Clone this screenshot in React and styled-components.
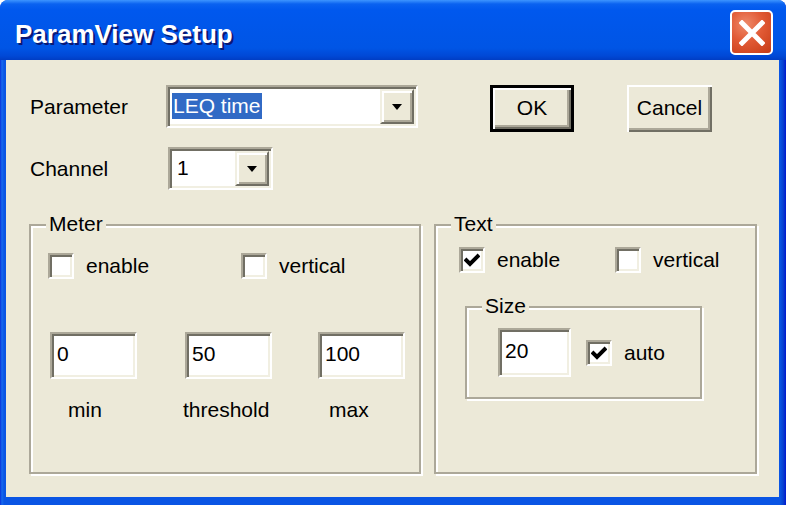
import React from 'react';
import styled, { createGlobalStyle } from 'styled-components';

const FACE = '#ECE9D8';
const UI_FONT = `"Liberation Sans", Arial, sans-serif`;

const GlobalStyle = createGlobalStyle`
  body {
    margin: 0;
    background: #fff;
    font-family: ${UI_FONT};
  }
`;

const Window = styled.div`
  width: 786px;
  height: 505px;
  display: flex;
  flex-direction: column;
  background: linear-gradient(90deg, #0831d9 0, #166aee 2px, #0a55e4 4px, #0a55e4 780px, #0842d0 783px, #0019cf 786px);
  border-radius: 8px 8px 0 0;
  overflow: hidden;
`;

const TitleBar = styled.div`
  height: 60px;
  flex: none;
  box-sizing: border-box;
  display: flex;
  align-items: center;
  justify-content: space-between;
  padding: 5px 13px 0 15px;
  background: linear-gradient(#3d95ff 0, #0a62f0 4px, #0058ee 10px, #0055e5 48px, #0048d6 56px, #003dc4 60px);
`;

const Title = styled.span`
  color: #fff;
  font: bold 26px "Liberation Sans", Arial, sans-serif;
  text-shadow: 2px 2px 0 #0a1874;
  margin-top: 3px;
`;

const CloseButton = styled.div`
  width: 43px;
  height: 45px;
  box-sizing: border-box;
  border: 2px solid #fff;
  border-radius: 5px;
  background: radial-gradient(circle at 35% 30%, #ee8a6a 0, #e15a35 45%, #c63b16 100%);
  display: flex;
  align-items: center;
  justify-content: center;
`;

const Body = styled.div`
  flex: 1;
  margin: 0 7px 8px 6px;
  background: ${FACE};
  box-sizing: border-box;
  padding: 25px 0 0 23px;
  font-size: 21px;
  color: #000;
`;

const Row = styled.div`
  display: flex;
  align-items: flex-start;
  margin-top: ${(p) => p.$gap || 0}px;
  margin-left: ${(p) => p.$indent || 0}px;
`;

const Label = styled.div`
  width: ${(p) => p.$w}px;
  height: 43px;
  line-height: 43px;
  flex: none;
`;

const sunken = `
  box-sizing: border-box;
  background: #fff;
  border: 2px solid;
  border-color: #aca899 #fff #fff #aca899;
  box-shadow: inset 2px 2px 0 #716f64, inset -2px -2px 0 #f1efe2;
`;

const Combo = styled.div`
  ${sunken}
  width: ${(p) => p.$w}px;
  height: 43px;
  padding: 2px;
  display: flex;
  flex: none;
`;

const ComboText = styled.div`
  flex: 1;
  display: flex;
  align-items: center;
  padding-left: ${(p) => p.$pad || 2}px;
  padding-bottom: 2px;
`;

const Selected = styled.span`
  background: #316ac5;
  color: #fff;
  height: 26px;
  line-height: 26px;
  padding: 0 1px;
`;

const DropButton = styled.div`
  width: 34px;
  box-sizing: border-box;
  background: ${FACE};
  border: 2px solid;
  border-color: #f1efe2 #716f64 #716f64 #f1efe2;
  box-shadow: inset 2px 2px 0 #fff, inset -2px -2px 0 #aca899;
  display: flex;
  align-items: center;
  justify-content: center;
`;

const Arrow = styled.span`
  width: 0;
  height: 0;
  border-left: 5px solid transparent;
  border-right: 5px solid transparent;
  border-top: 6px solid #000;
`;

const Button = styled.div`
  width: ${(p) => p.$w}px;
  height: 47px;
  margin-left: ${(p) => p.$ml}px;
  box-sizing: border-box;
  flex: none;
  background: ${FACE};
  border: ${(p) => (p.$default ? '3px solid #000' : 'none')};
  box-shadow: inset 2px 2px 0 #fff, inset -2px -2px 0 #716f64, inset -4px -4px 0 #aca899;
  display: flex;
  align-items: center;
  justify-content: center;
  padding-bottom: 2px;
`;

const GroupsRow = styled.div`
  display: flex;
  gap: 13px;
  margin-top: 34px;
`;

const Group = styled.div`
  position: relative;
  flex: none;
  width: ${(p) => p.$w}px;
  height: ${(p) => p.$h}px;
  box-sizing: border-box;
  border: 2px solid #aca899;
  box-shadow: inset 2px 2px 0 #fff, 2px 2px 0 #fff;
  padding: ${(p) => p.$pad};
  margin: ${(p) => p.$margin || 0};
`;

const Legend = styled.span`
  position: absolute;
  top: -15px;
  left: 15px;
  padding: 0 3px;
  background: ${FACE};
  line-height: 26px;
`;

const CheckRow = styled.div`
  display: flex;
  align-items: center;
`;

const CheckItem = styled.div`
  display: flex;
  align-items: center;
  gap: 12px;
  width: ${(p) => (p.$w ? `${p.$w}px` : 'auto')};
  flex: none;
`;

const Box = styled.span`
  ${sunken}
  width: 26px;
  height: 26px;
  display: flex;
  align-items: center;
  justify-content: center;
`;

const Edit = styled.div`
  ${sunken}
  width: ${(p) => p.$w}px;
  height: ${(p) => p.$h}px;
  display: flex;
  align-items: center;
  padding: 0 0 4px 5px;
  flex: none;
`;

const Fields = styled.div`
  display: grid;
  grid-template-columns: 135px 133px 87px;
  margin: 53px 0 0 2px;
`;

const Field = styled.div`
  display: flex;
  flex-direction: column;
`;

const FieldLabel = styled.span`
  line-height: 26px;
  margin: 18px 0 0 ${(p) => p.$ml}px;
`;

const SizeRow = styled.div`
  display: flex;
  align-items: center;
  gap: 15px;
`;

const CloseIcon = () => (
  <svg width="26" height="26" viewBox="0 0 26 26">
    <path d="M3 3 L23 23 M23 3 L3 23" stroke="#fff" strokeWidth="5" strokeLinecap="square" />
  </svg>
);

const Tick = () => (
  <svg width="16" height="14" viewBox="0 0 16 14">
    <path d="M1 6 L6 11 L15 2" stroke="#000" strokeWidth="4" fill="none" />
  </svg>
);

const Check = ({ checked, label, w }) => (
  <CheckItem $w={w}>
    <Box>{checked && <Tick />}</Box>
    <span>{label}</span>
  </CheckItem>
);

const meterFields = [
  { value: '0', label: 'min', offset: 18 },
  { value: '50', label: 'threshold', offset: -2 },
  { value: '100', label: 'max', offset: 11 },
];

const App = () => (
  <>
    <GlobalStyle />
    <Window>
      <TitleBar>
        <Title>ParamView Setup</Title>
        <CloseButton>
          <CloseIcon />
        </CloseButton>
      </TitleBar>
      <Body>
        <Row $indent={1}>
          <Label $w={136}>Parameter</Label>
          <Combo $w={252}>
            <ComboText>
              <Selected>LEQ time</Selected>
            </ComboText>
            <DropButton>
              <Arrow />
            </DropButton>
          </Combo>
          <Button $w={84} $ml={72} $default>
            OK
          </Button>
          <Button $w={85} $ml={53}>
            Cancel
          </Button>
        </Row>
        <Row $gap={15} $indent={1}>
          <Label $w={138}>Channel</Label>
          <Combo $w={105}>
            <ComboText $pad={5}>1</ComboText>
            <DropButton>
              <Arrow />
            </DropButton>
          </Combo>
        </Row>
        <GroupsRow>
          <Group $w={392} $h={250} $pad="27px 0 0 17px">
            <Legend>Meter</Legend>
            <CheckRow>
              <Check label="enable" w={193} />
              <Check label="vertical" />
            </CheckRow>
            <Fields>
              {meterFields.map((f) => (
                <Field key={f.label}>
                  <Edit $w={87} $h={47}>{f.value}</Edit>
                  <FieldLabel $ml={f.offset}>{f.label}</FieldLabel>
                </Field>
              ))}
            </Fields>
          </Group>
          <Group $w={323} $h={250} $pad="21px 0 0 23px">
            <Legend>Text</Legend>
            <CheckRow>
              <Check label="enable" checked w={156} />
              <Check label="vertical" />
            </CheckRow>
            <Group $w={237} $h={93} $pad="20px 0 0 31px" $margin="33px 0 0 6px">
              <Legend>Size</Legend>
              <SizeRow>
                <Edit $w={73} $h={49}>20</Edit>
                <Check label="auto" checked />
              </SizeRow>
            </Group>
          </Group>
        </GroupsRow>
      </Body>
    </Window>
  </>
);

export default App;
